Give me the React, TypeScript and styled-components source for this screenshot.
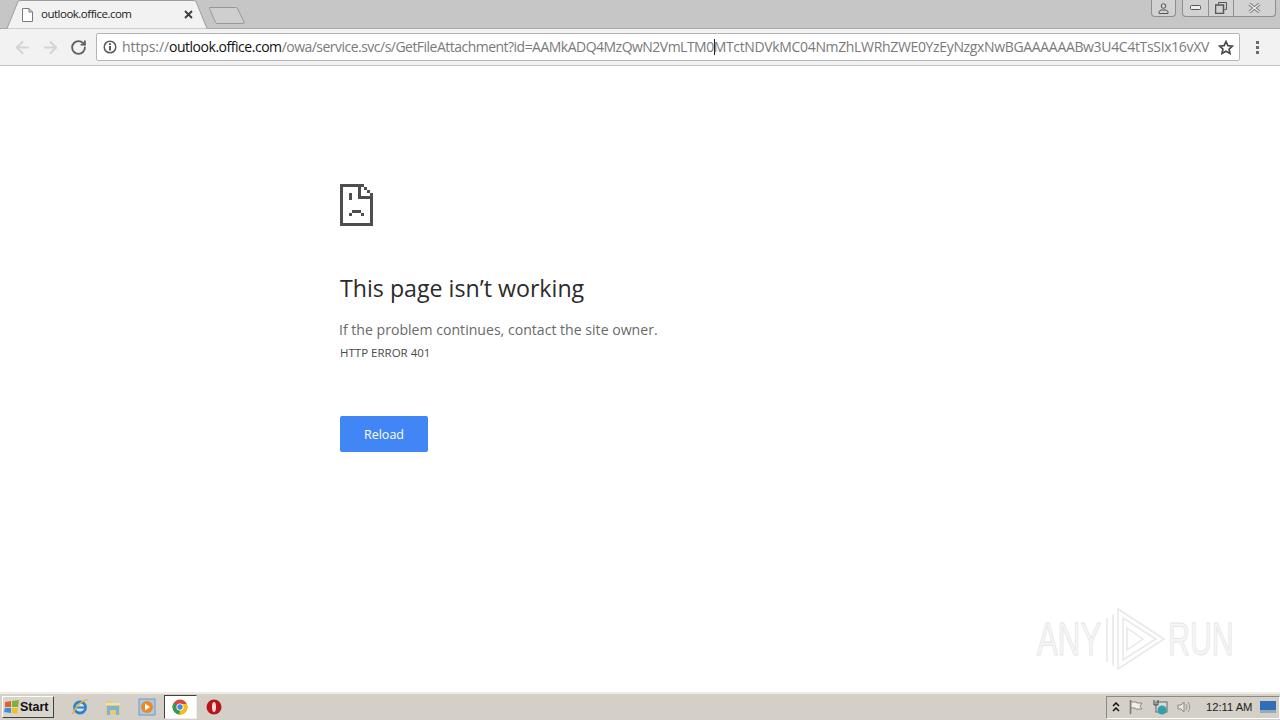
import React from 'react'
import styled, { createGlobalStyle } from 'styled-components'
import { LuArrowLeft, LuArrowRight, LuRotateCw } from 'react-icons/lu'

const GlobalStyle = createGlobalStyle`
  html, body {
    margin: 0;
    padding: 0;
    background: #fff;
  }
  body {
    font-family: "Open Sans", "Noto Sans", sans-serif;
  }
`

const Screen = styled.div`
  position: relative;
  width: 1280px;
  height: 720px;
  display: flex;
  flex-direction: column;
  overflow: hidden;
`

const TabStrip = styled.div`
  height: 29px;
  flex: none;
  display: flex;
  align-items: flex-start;
  justify-content: space-between;
  background: #c6c6c6;
  border-bottom: 1px solid #a9a9a9;
  box-sizing: border-box;
`

const TabGroup = styled.div`
  display: flex;
  align-items: flex-start;
  padding-left: 7px;
`

const Tab = styled.div`
  position: relative;
  width: 201px;
  height: 29px;
  display: flex;
  align-items: center;
  padding: 0 15px 0 15px;
  box-sizing: border-box;
  z-index: 1;
`

const TabShape = styled.svg`
  position: absolute;
  left: 0;
  top: 0;
`

const TabLabel = styled.span`
  position: relative;
  flex: 1;
  margin-left: 8px;
  padding-bottom: 2px;
  font-size: 11.5px;
  color: #222;
  letter-spacing: -0.5px;
`

const TabIcon = styled.svg`
  position: relative;
  flex: none;
`

const NewTab = styled.svg`
  margin: 7px 0 0 1px;
`

const WindowControls = styled.div`
  display: flex;
  align-items: flex-start;
  gap: 6px;
  margin-right: 4px;
`

const ControlGroup = styled.div`
  display: flex;
  height: 16px;
  background: #d2d2d2;
  border: 1px solid #8e8e8e;
  border-top: none;
  border-radius: 0 0 4px 4px;
`

const ControlButton = styled.div<{ $width: number }>`
  width: ${({ $width }) => $width}px;
  display: flex;
  align-items: center;
  justify-content: center;
  & + & {
    border-left: 1px solid #8e8e8e;
  }
`

const Toolbar = styled.div`
  height: 37px;
  flex: none;
  display: flex;
  align-items: center;
  background: #f2f2f2;
  border-bottom: 1px solid #c4c4c4;
  box-sizing: border-box;
  padding-left: 8px;
`

const NavButton = styled.div<{ $color: string }>`
  width: 28px;
  display: flex;
  justify-content: center;
  color: ${({ $color }) => $color};
`

const AddressBar = styled.div`
  width: 1144px;
  height: 28px;
  margin-left: 4px;
  display: flex;
  align-items: center;
  background: #fff;
  border: 1px solid #b5b5b5;
  border-radius: 2px;
  box-sizing: border-box;
  padding: 0 6px;
`

const InfoIcon = styled.svg`
  flex: none;
`

const UrlText = styled.div`
  width: 1088px;
  margin-left: 5px;
  padding-bottom: 2px;
  white-space: nowrap;
  font-size: 14px;
  color: #7a7a7a;
`

const UrlPart = styled.span<{ $spacing: number; $host?: boolean }>`
  letter-spacing: ${({ $spacing }) => $spacing}px;
  color: ${({ $host }) => ($host ? '#111' : 'inherit')};
`

const Caret = styled.span`
  display: inline-block;
  width: 1px;
  height: 16px;
  margin: 0 -1px 0 0;
  vertical-align: -3px;
  background: #222;
`

const StarIcon = styled.svg`
  margin-left: 9px;
  flex: none;
`

const MenuDots = styled.div`
  margin-left: 16px;
  display: flex;
  flex-direction: column;
  gap: 2px;
`

const Dot = styled.i`
  display: block;
  width: 3px;
  height: 3px;
  background: #6a6a6a;
`

const Page = styled.main`
  flex: 1;
  background: #fff;
  padding: 118px 0 0 340px;
`

const Heading = styled.h1`
  margin: 40px 0 0;
  font-size: 23.2px;
  line-height: 34px;
  font-weight: 400;
  color: #2b2b2b;
`

const Message = styled.p`
  margin: 15px 0 0 -1px;
  font-size: 14.1px;
  line-height: 20px;
  color: #6a6a6a;
`

const ErrorCode = styled.div`
  margin-top: 5px;
  font-size: 11.5px;
  line-height: 16px;
  color: #4a4a4a;
`

const ReloadButton = styled.button`
  display: block;
  width: 88px;
  height: 36px;
  margin-top: 55px;
  padding: 0;
  border: none;
  border-radius: 2px;
  background: #4285f4;
  color: #fff;
  font-family: inherit;
  font-size: 12.5px;
`

const Taskbar = styled.footer`
  height: 28px;
  flex: none;
  display: flex;
  align-items: center;
  background: #d4d0c8;
  border-top: 2px solid #efece6;
  box-sizing: border-box;
`

const StartButton = styled.div`
  width: 52px;
  height: 22px;
  margin-left: 2px;
  display: flex;
  align-items: center;
  box-sizing: border-box;
  padding-left: 1px;
  background: #d8d5ce;
  border: 1px solid;
  border-color: #fff #404040 #404040 #fff;
  font-family: "Liberation Sans", sans-serif;
  font-size: 12.5px;
  font-weight: 700;
  color: #111;
`

const QuickLaunch = styled.div`
  display: flex;
  align-items: center;
  margin-left: 9px;
`

const TaskItem = styled.div<{ $active?: boolean }>`
  width: 33.5px;
  height: 24px;
  display: flex;
  align-items: center;
  justify-content: center;
  box-sizing: border-box;
  ${({ $active }) => $active && `
    background: #fff;
    border: 1px solid;
    border-color: #404040 #eee #eee #404040;
  `}
`

const Tray = styled.div`
  margin-left: auto;
  height: 23px;
  width: 174px;
  display: flex;
  align-items: center;
  box-sizing: border-box;
  padding: 0 2px 0 5px;
  border: 1px solid;
  border-color: #8c8a84 #fff #fff #8c8a84;
`

const TrayIcons = styled.div`
  display: flex;
  align-items: center;
  gap: 8px;
`

const Clock = styled.span`
  margin-left: 14px;
  font-family: "Liberation Sans", sans-serif;
  font-size: 11.2px;
  color: #222;
  white-space: nowrap;
`

const DesktopIcon = styled.svg`
  margin-left: 8px;
  flex: none;
`

const Watermark = styled.div`
  position: absolute;
  left: 1037px;
  top: 608px;
  display: flex;
  align-items: center;
  gap: 3px;
  color: #f6f6f6;
  font-family: "Liberation Sans", sans-serif;
  font-size: 46px;
  -webkit-text-stroke: 1px #e6e6e6;
  pointer-events: none;
`

const WatermarkWord = styled.span<{ $scale: number }>`
  display: inline-block;
  width: 65px;
  transform: scaleX(${({ $scale }) => $scale});
  transform-origin: left center;
  white-space: nowrap;
`

const SadPage = () => (
  <svg width="33" height="42" viewBox="0 0 33 42" shapeRendering="crispEdges" fill="#4e4e4e">
    <path d="M0 0h21v3H3v36h27V15h3v27H0z" />
    <path d="M18 0h3v12h12v3H18z" />
    <path d="M21 0h3v3h-3zM24 3h3v3h-3zM27 6h3v3h-3zM30 9h3v3h-3z" />
    <path d="M9 9h3v7H9zM9 29h3v3H9zM12 26h9v3h-9zM21 29h3v3h-3z" />
  </svg>
)

const IeIcon = () => (
  <svg width="18" height="18" viewBox="0 0 18 18">
    <circle cx="9" cy="9.5" r="5.5" fill="#cfe6f5" stroke="#2f7fd0" strokeWidth="2.8" />
    <path d="M5 9.5h8" stroke="#2f7fd0" strokeWidth="2" />
    <path d="M1.5 16C4 9 10 3 16.500 1.500" fill="none" stroke="#e2b43c" strokeWidth="1.600" />
  </svg>
)

const FolderIcon = () => (
  <svg width="18" height="18" viewBox="0 0 18 18">
    <path d="M2 3h5l1 2h8v12H2z" fill="#e9c877" />
    <path d="M3 8h12v9h-3v-5H6v5H3z" fill="#79b6d3" />
    <path d="M2 5h14v2H2z" fill="#f3e2ad" />
  </svg>
)

const MediaIcon = () => (
  <svg width="18" height="18" viewBox="0 0 18 18">
    <rect x="1" y="1" width="16" height="16" fill="#a9c9e6" stroke="#6d9cc7" />
    <circle cx="9" cy="9" r="6" fill="#ee8a1d" />
    <path d="M7 5.5l5 3.5-5 3.5z" fill="#fff" />
  </svg>
)

const ChromeIcon = () => (
  <svg width="16" height="16" viewBox="0 0 16 16">
    <circle cx="8" cy="8" r="7.5" fill="#db4437" />
    <path d="M8 8L1.500 4.300A7.500 7.500 0 0 0 7.500 15.500z" fill="#2f9e4f" />
    <path d="M8 8l-.5 7.500A7.500 7.500 0 0 0 14.800 5H8z" fill="#f4c20d" />
    <circle cx="8" cy="8" r="3.600" fill="#fff" />
    <circle cx="8" cy="8" r="2.700" fill="#4285f4" />
  </svg>
)

const OperaIcon = () => (
  <svg width="16" height="16" viewBox="0 0 16 16">
    <circle cx="8" cy="8" r="7.500" fill="#b8141c" />
    <ellipse cx="8" cy="8" rx="2" ry="5" fill="#f4dcdc" />
  </svg>
)

const App = () => (
  <>
    <GlobalStyle />
    <Screen>
      <TabStrip>
        <TabGroup>
          <Tab>
            <TabShape width="201" height="29" viewBox="0 0 201 29">
              <path d="M0 28.500L11 1.500Q12 .5 14 .5H186Q188 .5 189 1.500L200 28.500" fill="#f2f2f2" stroke="#9c9c9c" />
            </TabShape>
            <TabIcon width="11" height="14" viewBox="0 0 11 14">
              <path d="M.5.5h6.500l3.500 3.500v9.500h-10z M7 .5v3.500h3.500" fill="#fff" stroke="#7b7b7b" />
            </TabIcon>
            <TabLabel>outlook.office.com</TabLabel>
            <TabIcon width="9" height="9" viewBox="0 0 9 9">
              <path d="M1 1l7 7M8 1l-7 7" stroke="#3a3a3a" strokeWidth="1.800" />
            </TabIcon>
          </Tab>
          <NewTab width="36" height="17" viewBox="0 0 36 17">
            <path d="M.5.5H27q1 0 1.500 1L35 15q.5 1.500-1 1.500H8q-1 0-1.500-1L.5 1.500z" fill="#cfcfcf" stroke="#989898" />
          </NewTab>
        </TabGroup>
        <WindowControls>
          <ControlGroup>
            <ControlButton $width={23}>
              <svg width="11" height="11" viewBox="0 0 11 11">
                <circle cx="5.500" cy="3" r="2.300" fill="none" stroke="#555" />
                <path d="M1 10.500V8.500l2-1.500h5l2 1.500v2z" fill="none" stroke="#555" />
              </svg>
            </ControlButton>
          </ControlGroup>
          <ControlGroup>
            <ControlButton $width={25}>
              <svg width="11" height="6" viewBox="0 0 11 6">
                <rect x=".5" y=".5" width="10" height="4" rx="1" fill="#eee" stroke="#555" />
              </svg>
            </ControlButton>
            <ControlButton $width={24}>
              <svg width="12" height="12" viewBox="0 0 12 12">
                <path d="M3.500 2.500V.5h8v7h-2" fill="none" stroke="#555" />
                <rect x=".5" y="3" width="8" height="8.500" fill="none" stroke="#555" strokeWidth="1.500" />
              </svg>
            </ControlButton>
            <ControlButton $width={41}>
              <svg width="13" height="10" viewBox="0 0 13 10">
                <path d="M1.500 1l10 8M11.500 1l-10 8" stroke="#777" strokeWidth="3.200" />
                <path d="M1.500 1l10 8M11.500 1l-10 8" stroke="#eee" strokeWidth="1.400" />
              </svg>
            </ControlButton>
          </ControlGroup>
        </WindowControls>
      </TabStrip>

      <Toolbar>
        <NavButton $color="#d4d4d4"><LuArrowLeft size={19} strokeWidth={2.6} /></NavButton>
        <NavButton $color="#d4d4d4"><LuArrowRight size={19} strokeWidth={2.6} /></NavButton>
        <NavButton $color="#5f5f5f"><LuRotateCw size={17} strokeWidth={2.6} /></NavButton>
        <AddressBar>
          <InfoIcon width="14" height="14" viewBox="0 0 14 14">
            <circle cx="7" cy="7" r="5.800" fill="none" stroke="#5a5a5a" strokeWidth="1.500" />
            <path d="M6 6h2v4.500H6zM6 3.200h2v1.800H6z" fill="#5a5a5a" />
          </InfoIcon>
          <UrlText>
            <UrlPart $spacing={-0.1}>https://</UrlPart>
            <UrlPart $spacing={-0.47} $host>outlook.office.com</UrlPart>
            <UrlPart $spacing={-0.52}>/owa/service.svc/s/GetFileAttachment?id=AAMkADQ4MzQwN2VmLTM0</UrlPart>
            <Caret />
            <UrlPart $spacing={-0.34}>MTctNDVkMC04NmZhLWRhZWE0YzEyNzgxNwBGAAAAAABw3U4C4tTsSIx16vXV</UrlPart>
          </UrlText>
          <StarIcon width="16" height="15" viewBox="0 0 16 15">
            <path d="M8 1.500l1.900 4.100 4.500.5-3.300 3 .9 4.400L8 11.300l-4 2.200.9-4.400-3.300-3 4.500-.5z" fill="none" stroke="#4a4a4a" strokeWidth="1.700" />
          </StarIcon>
        </AddressBar>
        <MenuDots><Dot /><Dot /><Dot /></MenuDots>
      </Toolbar>

      <Page>
        <SadPage />
        <Heading>This page isn’t working</Heading>
        <Message>If the problem continues, contact the site owner.</Message>
        <ErrorCode>HTTP ERROR 401</ErrorCode>
        <ReloadButton>Reload</ReloadButton>
      </Page>

      <Taskbar>
        <StartButton>
          <svg width="16" height="16" viewBox="0 0 16 16">
            <path d="M1 3l6-1v6H1z" fill="#e2622c" />
            <path d="M8 2l7-1-1 7H8z" fill="#7fb13c" />
            <path d="M1 9h6v5l-7-1z" fill="#3f8fd6" />
            <path d="M8 9h6l-1 6-5-1z" fill="#f0c02c" />
          </svg>
          Start
        </StartButton>
        <QuickLaunch>
          <TaskItem><IeIcon /></TaskItem>
          <TaskItem><FolderIcon /></TaskItem>
          <TaskItem><MediaIcon /></TaskItem>
          <TaskItem $active><ChromeIcon /></TaskItem>
          <TaskItem><OperaIcon /></TaskItem>
        </QuickLaunch>
        <Tray>
          <TrayIcons>
            <svg width="8" height="10" viewBox="0 0 8 10">
              <path d="M1 4l3-3 3 3M1 9l3-3 3 3" fill="none" stroke="#111" strokeWidth="1.500" />
            </svg>
            <svg width="16" height="16" viewBox="0 0 16 16">
              <path d="M2.500 1v14" stroke="#777" strokeWidth="1.500" />
              <path d="M3 3h5l1 1h5l-2 3 2 3H8L7 9H3z" fill="#f0eee8" stroke="#888" />
            </svg>
            <svg width="16" height="16" viewBox="0 0 16 16">
              <rect x="4" y="3" width="11" height="10" fill="#d8dde0" stroke="#666" />
              <circle cx="10" cy="11" r="4.500" fill="#35a0a8" />
              <path d="M2 1v5h4V1" fill="none" stroke="#444" />
            </svg>
            <svg width="16" height="16" viewBox="0 0 16 16">
              <path d="M2 6h3l3-3v10l-3-3H2z" fill="#e8e6e0" stroke="#888" />
              <path d="M10 5q2 3 0 6M12 3q3.500 5 0 10" fill="none" stroke="#999" />
            </svg>
          </TrayIcons>
          <Clock>12:11 AM</Clock>
          <DesktopIcon width="16" height="13" viewBox="0 0 16 13">
            <rect width="16" height="11" fill="#2f6fb5" />
            <rect y="9" width="16" height="3" fill="#9aa7b5" />
          </DesktopIcon>
        </Tray>
      </Taskbar>

      <Watermark>
        <WatermarkWord $scale={0.68}>ANY</WatermarkWord>
        <svg width="60" height="62" viewBox="0 0 60 62" fill="none" stroke="#e8e8e8" strokeWidth="1.500">
          <path d="M2 10v44M8 6v52" />
          <path d="M13 1l46 30-46 30z" />
          <path d="M18 10l33 21-33 21z" />
          <path d="M22 20l16 11-16 11z" />
        </svg>
        <WatermarkWord $scale={0.66}>RUN</WatermarkWord>
      </Watermark>
    </Screen>
  </>
)

export default App
